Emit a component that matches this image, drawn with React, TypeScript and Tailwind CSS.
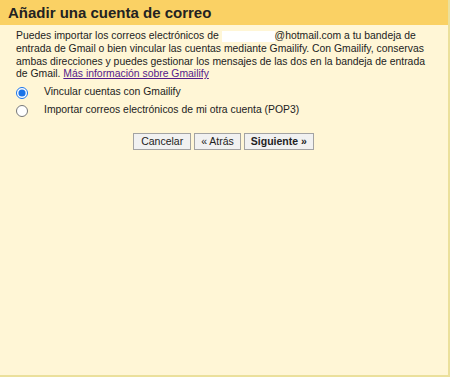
export default function App() {
  return (
    <div className="w-[450px] h-[377px] bg-[#fff6d6] border-r-2 border-b-2 border-[#ebe09c] font-['Liberation_Sans',Arial,sans-serif] text-[#222] flex flex-col">
      {/* Header */}
      <div className="h-[25px] bg-[#fad164] px-[8px] flex items-center">
        <h1 className="text-[15px] font-bold text-[#222] leading-none">Añadir una cuenta de correo</h1>
      </div>

      {/* Body */}
      <div className="px-[16px] pt-[5px] text-[10.4px] leading-[12.8px]">
        <p className="whitespace-nowrap">
          Puedes importar los correos electrónicos de{' '}
          <span className="inline-block w-[53px] h-[11px] bg-white align-middle" />
          @hotmail.com a tu bandeja de
          <br />
          entrada de Gmail o bien vincular las cuentas mediante Gmailify. Con Gmailify, conservas
          <br />
          ambas direcciones y puedes gestionar los mensajes de las dos en la bandeja de entrada
          <br />
          de Gmail.{' '}
          <a href="#" className="text-[#551a8b] underline">Más información sobre Gmailify</a>
        </p>

        <div className="mt-[5px] flex flex-col gap-[5px]">
          <label className="h-[13px] flex items-center gap-[16px]">
            <input type="radio" name="mode" defaultChecked className="w-[12px] h-[12px] m-0 accent-[#1a73e8]" />
            <span>Vincular cuentas con Gmailify</span>
          </label>
          <label className="h-[13px] flex items-center gap-[16px]">
            <input type="radio" name="mode" className="w-[12px] h-[12px] m-0" />
            <span>Importar correos electrónicos de mi otra cuenta (POP3)</span>
          </label>
        </div>

        <div className="mt-[16px] flex justify-center gap-[3px] pr-[1px]">
          <button className="h-[17px] px-[7px] text-[10.5px] leading-none bg-[#f1f1f1] border border-[#a3a3a3]">Cancelar</button>
          <button className="h-[17px] px-[6px] text-[10.5px] leading-none bg-[#f1f1f1] border border-[#a3a3a3]">« Atrás</button>
          <button className="h-[17px] px-[6px] text-[10.5px] leading-none font-bold bg-[#f1f1f1] border border-[#a3a3a3]">Siguiente »</button>
        </div>
      </div>
    </div>
  );
}
